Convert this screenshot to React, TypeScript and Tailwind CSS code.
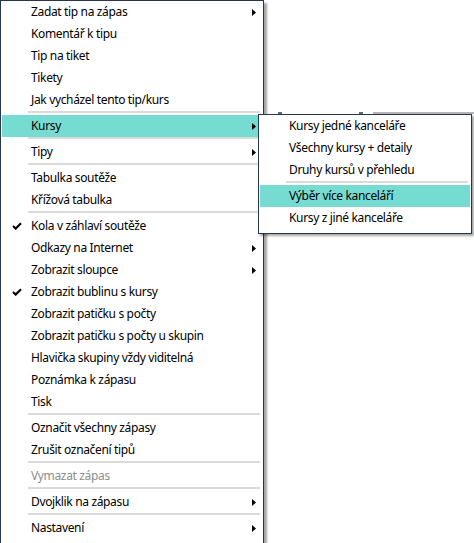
type Item =
  | { sep: true }
  | { sep?: false; label: string; arrow?: boolean; checked?: boolean; disabled?: boolean; active?: boolean };

const mainItems: Item[] = [
  { label: "Zadat tip na zápas", arrow: true },
  { label: "Komentář k tipu" },
  { label: "Tip na tiket" },
  { label: "Tikety" },
  { label: "Jak vycházel tento tip/kurs" },
  { sep: true },
  { label: "Kursy", arrow: true, active: true },
  { sep: true },
  { label: "Tipy", arrow: true },
  { sep: true },
  { label: "Tabulka soutěže" },
  { label: "Křížová tabulka" },
  { sep: true },
  { label: "Kola v záhlaví soutěže", checked: true },
  { label: "Odkazy na Internet", arrow: true },
  { label: "Zobrazit sloupce", arrow: true },
  { label: "Zobrazit bublinu s kursy", checked: true },
  { label: "Zobrazit patičku s počty" },
  { label: "Zobrazit patičku s počty u skupin" },
  { label: "Hlavička skupiny vždy viditelná" },
  { label: "Poznámka k zápasu" },
  { label: "Tisk" },
  { sep: true },
  { label: "Označit všechny zápasy" },
  { label: "Zrušit označení tipů" },
  { sep: true },
  { label: "Vymazat zápas", disabled: true },
  { sep: true },
  { label: "Dvojklik na zápasu", arrow: true },
  { sep: true },
  { label: "Nastavení", arrow: true },
];

const subItems: Item[] = [
  { label: "Kursy jedné kanceláře" },
  { label: "Všechny kursy + detaily" },
  { label: "Druhy kursů v přehledu" },
  { sep: true },
  { label: "Výběr více kanceláří", active: true },
  { label: "Kursy z jiné kanceláře" },
];

function Arrow() {
  return (
    <svg width="4" height="7" viewBox="0 0 4 7" className="shrink-0">
      <polygon points="0,0 4,3.5 0,7" fill="#000" />
    </svg>
  );
}

function Check() {
  return (
    <svg width="10" height="8" viewBox="0 0 10 8">
      <path d="M1 4 L3.7 6.6 L9 1.2" fill="none" stroke="#000" strokeWidth="2.1" />
    </svg>
  );
}

function MenuList({ items }: { items: Item[] }) {
  return (
    <>
      {items.map((it, i) =>
        it.sep ? (
          <div key={i} className="h-[4px] pl-[26px] pr-[2px]">
            <div className="h-[2px] bg-[#dadada]" />
          </div>
        ) : (
          <div
            key={i}
            className={`flex h-[22px] items-center pr-[6px] ${it.active ? "bg-[#76dcd2]" : ""}`}
          >
            <div className="flex w-[29px] justify-center pl-[1px]">{it.checked && <Check />}</div>
            <span className={`flex-1 whitespace-nowrap ${it.disabled ? "text-[#8d8d8d]" : "text-black"}`}>
              {it.label}
            </span>
            {it.arrow && <Arrow />}
          </div>
        )
      )}
    </>
  );
}

export default function App() {
  return (
    <div className="relative h-[543px] w-[474px] overflow-hidden bg-white font-['Noto_Sans',sans-serif] text-[12px] leading-none tracking-[-0.35px]">
      <div className="w-[264px] border border-[#25384b] bg-white px-px pb-[4px] shadow-[3px_3px_2px_rgba(0,0,0,0.35)]">
        <MenuList items={mainItems} />
      </div>

      {/* bits of the window behind */}
      <div className="absolute left-[373px] top-[112px] h-[2px] w-[101px] bg-[#b4b4b4]" />
      <div className="absolute left-[278px] top-[112px] h-[2px] w-[4px] bg-[#5a6a7a]" />
      <div className="absolute left-[359px] top-[112px] h-[2px] w-[4px] bg-[#5a6a7a]" />

      <div className="absolute left-[258px] top-[114px] w-[214px] border border-[#25384b] bg-white px-px pb-[4px] shadow-[2px_2px_2px_rgba(0,0,0,0.35)]">
        <MenuList items={subItems} />
      </div>
    </div>
  );
}
